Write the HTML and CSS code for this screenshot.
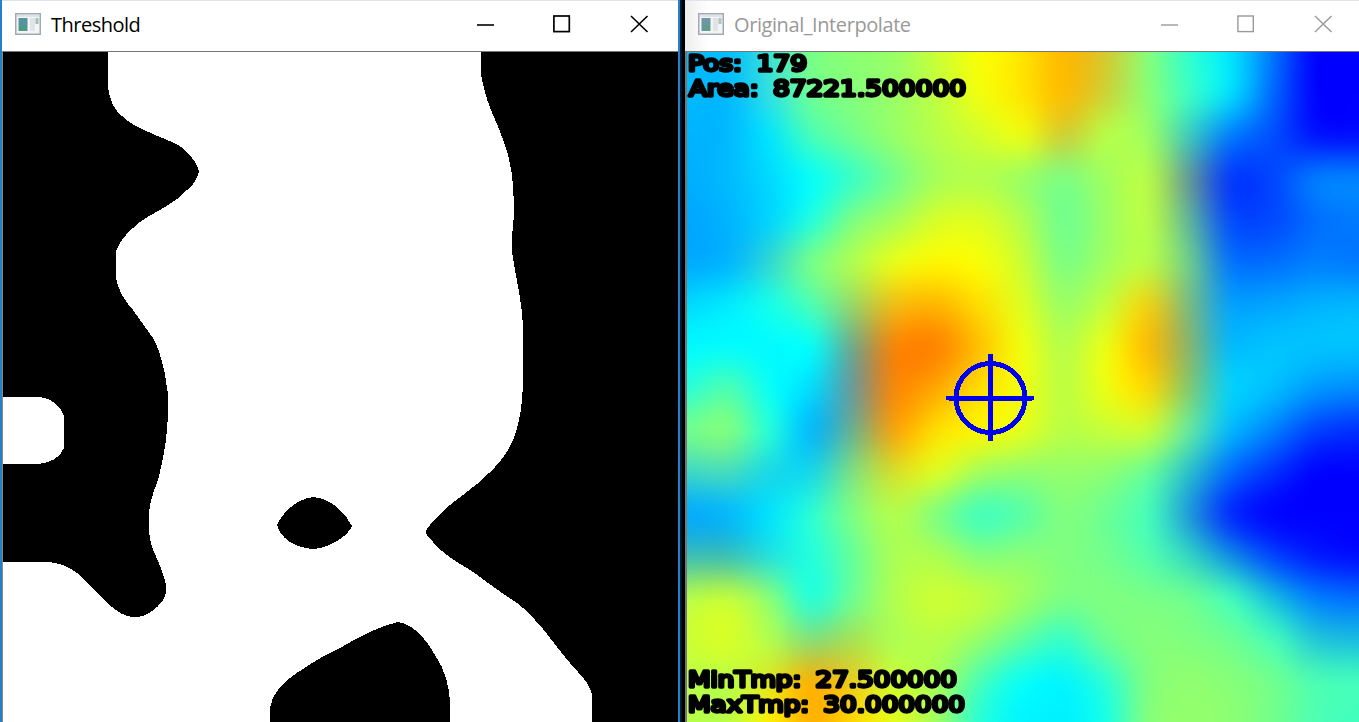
FILE: index.html
```html
<!DOCTYPE html>
<html lang="en">
<head>
<meta charset="utf-8">
<title>Threshold</title>
<link rel="stylesheet" href="styles.css">
</head>
<body>
<main class="desktop">
  <section class="window window-active">
    <header class="titlebar">
      <svg class="app-icon" viewBox="0 0 26 22"><rect x="0.75" y="0.75" width="24.5" height="20.5" fill="#f4f5f6" stroke="#a4a8b0" stroke-width="1.5"/><rect x="2" y="2" width="22" height="2" fill="#dfe3e8"/><rect x="3.5" y="5" width="9" height="13" fill="#5593a0"/><rect x="4" y="12" width="8" height="6" fill="#4e9a86"/><rect x="15" y="5" width="5" height="13" fill="#e2e3e8"/><rect x="20.5" y="5" width="3" height="6" fill="#9cc3b0"/></svg>
      <h1 class="title title-threshold">Threshold</h1>
      <svg class="controls" viewBox="0 0 156 18"><path d="M0 10H17" stroke-width="1.6"/><rect x="76.9" y="1" width="15.4" height="15.6" stroke-width="1.7"/><path d="M154 1L170.500 17M170.500 1L154 17" stroke-width="1.6"/></svg>
    </header>
    <div class="view">
      <svg class="mask" viewBox="3 52 675 670" shape-rendering="crispEdges">
        <path d="M3 52H108V88C110 100 114 110 122 116C128 123 140 128 155 135C170 141 180 145 185 150C192 157 198 165 199 171C198 178 193 186 187 190C180 198 170 204 160 210C145 218 136 224 133 228C124 236 119 243 116 251V278C118 290 124 300 133 310C142 323 148 331 153 338C160 350 165 370 167 388Q169 396 168 412C167 440 164 455 158 480C150 500 149 510 148.500 520C149 535 150 545 155 554C161 568 166 580 166.500 590C165 600 160 605 152 611C145 616 140 617 134 617.500C124 616 118 612 112 607C100 596 88 583 77 573C68 566 58 562 46 562H3V464H38C50 463 60 458 64 448V416C60 406 52 398 40 397H3Z"/>
        <path d="M481 52H678V722H592V695C590 685 585 680 578 672C565 658 555 644 543 629C530 614 522 605 505 595C490 585 478 575 470 570C455 561 442 553 433 542C428 537 426 534 425.500 532C428 526 434 520 445 509C458 498 475 487 488 474C500 463 508 452 513 440C519 425 523 405 523 380V330C522 300 517 285 512 252V236C515 215 514 195 512 175C508 150 505 145 497 124C488 104 485 95 481 75Z"/>
        <path d="M277 525C281 515 295 499 313 497C330 498 345 512 352 526C348 536 330 548 313 549C295 548 280 538 277 525Z"/>
        <path d="M270 722V708C272 695 280 687 286 681C300 670 320 657 340 648C360 636 380 626 398 622C412 624 425 637 435 655C445 670 449 685 450 702V722Z"/>
      </svg>
    </div>
  </section>
  <section class="window window-inactive">
    <header class="titlebar">
      <svg class="app-icon" viewBox="0 0 26 22"><rect x="0.75" y="0.75" width="24.5" height="20.5" fill="#f4f5f6" stroke="#a4a8b0" stroke-width="1.5"/><rect x="2" y="2" width="22" height="2" fill="#dfe3e8"/><rect x="3.5" y="5" width="9" height="13" fill="#6f96a4"/><rect x="4" y="12" width="8" height="6" fill="#629c8c"/><rect x="15" y="5" width="5" height="13" fill="#e2e3e8"/><rect x="20.500" y="5" width="3" height="6" fill="#a9c9ba"/></svg>
      <h1 class="title title-original">Original_Interpolate</h1>
      <svg class="controls" viewBox="0 0 156 18"><path d="M0 10H17" stroke-width="1.4"/><rect x="76.900" y="1" width="15.4" height="15.6" stroke-width="1.4"/><path d="M154 1L170.500 17M170.500 1L154 17" stroke-width="1.4"/></svg>
    </header>
    <div class="view">
      <canvas class="heatmap" width="672" height="670"></canvas>
      <svg class="overlay" viewBox="687 52 672 670">
        <g class="target" shape-rendering="crispEdges"><circle cx="990.500" cy="398" r="34.500"/><path d="M990.500 356V439M948.500 398H1032"/></g>
        <g class="readout">
          <text x="688" y="70.500" textLength="119" lengthAdjust="spacingAndGlyphs">Pos: 179</text>
          <text x="689" y="96" textLength="277" lengthAdjust="spacingAndGlyphs">Area: 87221.500000</text>
          <text x="688" y="686.500" textLength="269" lengthAdjust="spacingAndGlyphs">MinTmp: 27.500000</text>
          <text x="688" y="712" textLength="277" lengthAdjust="spacingAndGlyphs">MaxTmp: 30.000000</text>
        </g>
      </svg>
    </div>
  </section>
</main>
<script src="heatmap.js"></script>
</body>
</html>
```

FILE: styles.css
```css
* { box-sizing: border-box; }
body { margin: 0; background: #000; overflow: hidden; }
.desktop { display: flex; gap: 5px; width: 1359px; height: 722px; background: linear-gradient(90deg, #000 0 680px, #001a2e 680px 682px, #000 682px); }
.window { display: flex; flex-direction: column; height: 722px; background: #fff; }
.window-active { width: 680px; border-left: 2px solid #267fc9; border-right: 2px solid #267fc9; }
.window-inactive { width: 674px; background: linear-gradient(90deg, #eee, #fff 24px); }
.titlebar { display: flex; align-items: center; height: 52px; padding: 0 0 4px 13px; border-top: 1px solid #dfe3ee; border-bottom: 1px solid #777; }
.app-icon { width: 26px; height: 22px; flex: none; }
.title { margin: 0 0 0 10px; padding-top: 2px; font: 400 20px/28px "Open Sans", "Noto Sans", sans-serif; color: #000; white-space: nowrap; flex: 1; }
.title-threshold { letter-spacing: -0.5px; }
.title-original { letter-spacing: -0.42px; }
.window-inactive .title { color: #999; }
.controls { width: 156px; height: 18px; margin-right: 45px; overflow: visible; fill: none; stroke: #000; flex: none; }
.window-inactive .controls { stroke: #999; margin-right: 42px; }
.view { position: relative; flex: 1; border-left: 1px solid #888; overflow: hidden; background: #fff; }
.window-inactive .view { border-left: 2px solid #777; }
.mask, .heatmap { display: block; height: 670px; }
.mask { width: 675px; }
.heatmap { width: 672px; }
.overlay { position: absolute; left: 0; top: 0; width: 672px; height: 670px; }
.target { fill: none; stroke: #0000f0; stroke-width: 5; stroke-linecap: round; }
.readout { font: 400 22px "DejaVu Sans", sans-serif; word-spacing: 5px; fill: #000; stroke: #000; stroke-width: 3.3px; stroke-linejoin: round; }
```

FILE: heatmap.js
```js
// Numbers are colour-scale positions: 0 blue, 100 cyan, 200 yellow, 300 red.
// Triples are blended RGB values that lie off the scale.
const grid = [
  [73,75,[60,225,210],148,155,160,180,198,210,228,[215,200,45],153,118,90,45,0,0],
  [73,72,[50,225,225],143,152,160,175,195,210,227,[205,210,55],155,123,88,40,0,0],
  [70,72,90,128,145,160,172,182,193,[205,205,55],172,162,[60,200,190],47,30,7,5],
  [68,73,85,101,122,145,165,170,160,148,163,173,[100,150,150],20,27,50,53],
  [65,70,83,113,150,166,185,187,170,143,160,174,[95,180,155],28,28,43,48],
  [66,70,[50,215,210],148,170,192,203,198,180,148,163,173,[110,205,140],44,43,50,47],
  [85,92,108,130,[155,215,100],[243,188,18],229,213,187,160,176,[245,210,15],[120,185,130],63,65,70,72],
  [98,99,98,101,[115,165,135],[252,130,2],250,225,195,170,193,227,[135,180,110],73,77,77,77],
  [115,132,103,86,[110,150,150],[252,134,3],234,213,195,173,193,215,[130,200,110],83,75,60,55],
  [145,153,115,71,[110,175,140],[252,163,8],212,203,190,172,178,180,[100,235,160],72,50,25,18],
  [[60,215,200],[70,220,190],[25,215,230],[20,215,235],[130,225,125],[215,225,40],187,163,156,158,155,140,[40,190,205],40,18,0,0],
  [66,71,89,117,150,171,148,124,133,151,142,127,[30,150,220],14,0,0,0],
  [[60,190,180],[60,190,180],[35,225,220],113,140,168,168,152,155,150,145,133,[50,215,195],[15,140,230],26,10,4],
  [172,179,155,112,143,170,181,177,163,149,150,148,143,126,[20,190,225],50,44],
  [180,186,170,[135,220,120],[170,225,80],168,172,158,136,120,143,152,150,143,128,[35,200,215],[25,190,225]],
  [172,172,[225,230,30],232,[235,205,30],180,165,127,102,96,116,150,157,153,145,130,127],
  [172,172,205,231,215,190,162,114,96,94,108,152,158,155,145,130,125]
];

function toRgb(v) {
  if (Array.isArray(v)) return v;
  if (v <= 100) return [0, v * 2.55, 255];
  if (v <= 200) return [(v - 100) * 2.55, 255, (200 - v) * 2.55];
  return [255, (300 - v) * 2.55, 0];
}
const nodes = grid.map(row => row.map(toRgb));

// Mitchell-Netravali weights for the four neighbours of a point.
function cubic(a, b, c, d, t) {
  const near = u => (7 * u * u * u - 12 * u * u + 16 / 3) / 6;
  const far = u => (-7 / 3 * u * u * u + 12 * u * u - 20 * u + 32 / 3) / 6;
  return a * far(1 + t) + b * near(t) + c * near(1 - t) + d * far(2 - t);
}
const clampIndex = i => Math.max(0, Math.min(16, i));

const canvas = document.querySelector('.heatmap');
const ctx = canvas.getContext('2d');
const image = ctx.createImageData(canvas.width, canvas.height);
for (let y = 0; y < canvas.height; y++) {
  const gy = y / 42, j = Math.floor(gy), ty = gy - j;
  // Blend the four neighbouring rows once per scanline.
  const line = nodes[0].map((_, i) => [0, 1, 2].map(k => cubic(
    nodes[clampIndex(j - 1)][i][k], nodes[clampIndex(j)][i][k],
    nodes[clampIndex(j + 1)][i][k], nodes[clampIndex(j + 2)][i][k], ty)));
  for (let x = 0; x < canvas.width; x++) {
    const gx = (x + 2) / 42, i = Math.floor(gx), tx = gx - i;
    const p = (y * canvas.width + x) * 4;
    for (let k = 0; k < 3; k++) {
      image.data[p + k] = cubic(line[clampIndex(i - 1)][k], line[clampIndex(i)][k],
        line[clampIndex(i + 1)][k], line[clampIndex(i + 2)][k], tx);
    }
    image.data[p + 3] = 255;
  }
}
ctx.putImageData(image, 0, 0);
```
